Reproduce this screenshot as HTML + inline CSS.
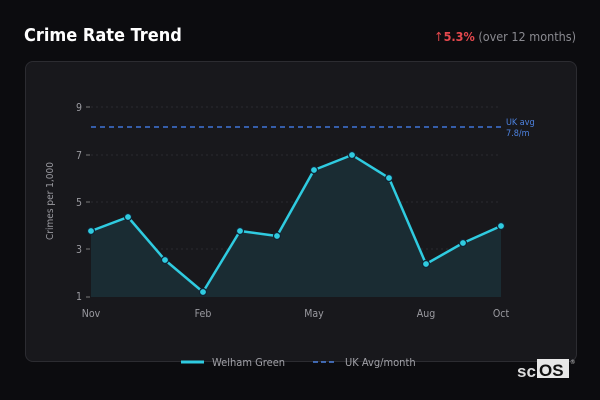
<!DOCTYPE html>
<html><head><style>
body{margin:0;width:600px;height:400px;background:#0c0c0f;font-family:"Liberation Sans","DejaVu Sans",sans-serif;overflow:hidden;position:relative}
.t{position:absolute;left:24px;top:25px;color:#fff;font-weight:bold;font-size:18px;font-family:"DejaVu Sans Condensed","DejaVu Sans",sans-serif}
.r{position:absolute;right:24px;top:29px;font-size:12.5px;color:#8a8a90;font-family:"DejaVu Sans Condensed","DejaVu Sans",sans-serif}
.r b{color:#e5484d}
.r i{font-style:normal;color:#e5484d}
.card{position:absolute;left:25px;top:61px;width:550px;height:299px;background:#18181c;border:1px solid #2c2c31;border-radius:8px}
svg{position:absolute;left:0;top:0}
</style></head><body>
<div class="t">Crime Rate Trend</div>
<div class="r"><i>↑</i><b>5.3%</b> (over 12 months)</div>
<div class="card"></div>
<svg width="600" height="400" font-family="DejaVu Sans Condensed, DejaVu Sans, sans-serif">
<g stroke="#2a2a30" stroke-dasharray="2 3" stroke-width="1">
<line x1="91" y1="107" x2="501" y2="107"/><line x1="91" y1="155" x2="501" y2="155"/><line x1="91" y1="202" x2="501" y2="202"/><line x1="91" y1="249" x2="501" y2="249"/>
</g>
<g fill="#9a9aa0" font-size="10.5" text-anchor="end">
<text x="82" y="111">9</text><text x="82" y="159">7</text><text x="82" y="206">5</text><text x="82" y="253">3</text><text x="82" y="300">1</text>
</g>
<g stroke="#777" stroke-width="1"><line x1="86" y1="107" x2="90" y2="107"/><line x1="86" y1="155" x2="90" y2="155"/><line x1="86" y1="202" x2="90" y2="202"/><line x1="86" y1="249" x2="90" y2="249"/><line x1="86" y1="297" x2="90" y2="297"/></g>
<text x="53" y="201" fill="#9a9aa0" font-size="10" text-anchor="middle" transform="rotate(-90 53 201)">Crimes per 1,000</text>
<path d="M91 231 L128 217 L165 260 L203 292 L240 231 L277 236 L314 170 L352 155 L389 178 L426 264 L463 243 L501 226 L501 297 L91 297Z" fill="#1a2c33"/>
<line x1="91" y1="127" x2="501" y2="127" stroke="#3f74d8" stroke-width="1.6" stroke-dasharray="5 4"/>
<text x="506" y="125" fill="#4d82e0" font-size="9">UK avg</text><text x="506" y="136" fill="#4d82e0" font-size="9">7.8/m</text>
<path d="M91 231 L128 217 L165 260 L203 292 L240 231 L277 236 L314 170 L352 155 L389 178 L426 264 L463 243 L501 226" fill="none" stroke="#2fcbe0" stroke-width="2.5" stroke-linejoin="round"/>
<g fill="#2fcbe0" stroke="#123" stroke-width="1.2">
<circle cx="91" cy="231" r="3.5"/><circle cx="128" cy="217" r="3.5"/><circle cx="165" cy="260" r="3.5"/><circle cx="203" cy="292" r="3.5"/><circle cx="240" cy="231" r="3.5"/><circle cx="277" cy="236" r="3.5"/><circle cx="314" cy="170" r="3.5"/><circle cx="352" cy="155" r="3.5"/><circle cx="389" cy="178" r="3.5"/><circle cx="426" cy="264" r="3.5"/><circle cx="463" cy="243" r="3.5"/><circle cx="501" cy="226" r="3.5"/>
</g>
<g fill="#9a9aa0" font-size="10.5" text-anchor="middle">
<text x="91" y="317">Nov</text><text x="203" y="317">Feb</text><text x="314" y="317">May</text><text x="426" y="317">Aug</text><text x="501" y="317">Oct</text>
</g>
<line x1="181" y1="362" x2="204" y2="362" stroke="#2fcbe0" stroke-width="3"/>
<text x="212" y="366" fill="#a0a0a6" font-size="11">Welham Green</text>
<line x1="313" y1="362" x2="337" y2="362" stroke="#4d82e0" stroke-width="1.6" stroke-dasharray="5 3"/>
<text x="345" y="366" fill="#a0a0a6" font-size="11">UK Avg/month</text>
<text x="517" y="377" fill="#ddd" font-size="17" font-weight="bold" font-family="Liberation Sans, sans-serif">sc</text>
<rect x="537" y="359" width="32" height="19" fill="#e8e8e8"/>
<text x="539" y="376" fill="#111" font-size="17" font-weight="bold" font-family="Liberation Sans, sans-serif">OS</text>
<text x="570" y="364" fill="#ccc" font-size="6">®</text>
</svg>
</body></html>
